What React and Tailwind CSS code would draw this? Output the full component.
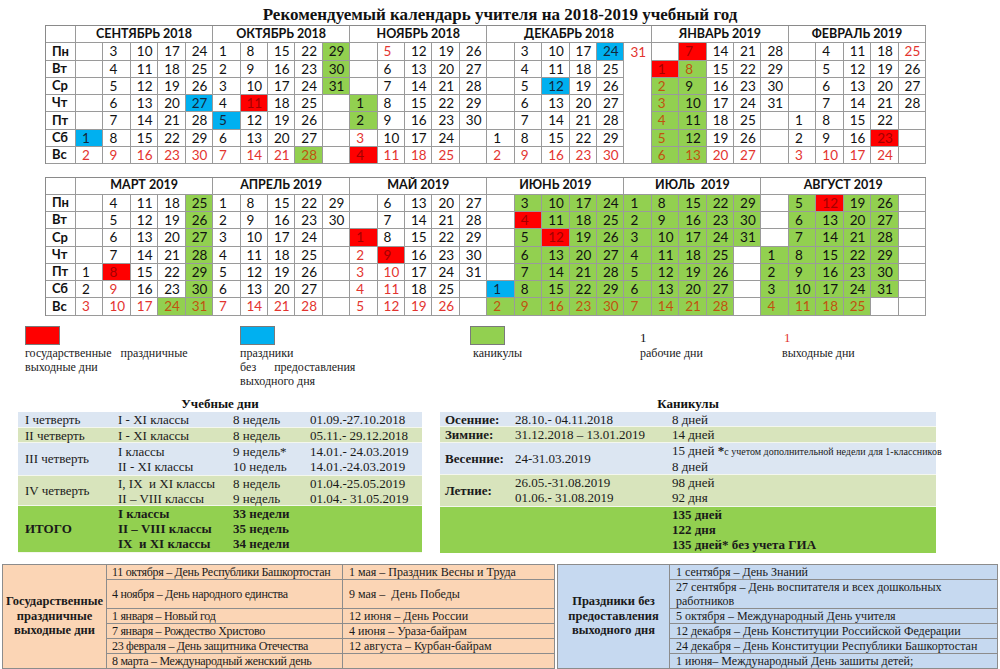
import React from 'react';

const SERIF = "font-['Liberation_Serif','Times_New_Roman',serif]";
const SANS = "font-['Lato','Open_Sans',sans-serif]";

const topMonths = [
  { name: 'СЕНТЯБРЬ 2018', cols: ['- - - - - 1B 2r', '3 4 5 6 7 8 9r', '10 11 12 13 14 15 16r', '17 18 19 20 21 22 23r', '24 25 26 27B 28 29 30r'] },
  { name: 'ОКТЯБРЬ 2018', cols: ['1 2 3 4 5B 6 7r', '8 9 10 11R 12 13 14r', '15 16 17 18 19 20 21r', '22 23 24 25 26 27 28G', '29g 30g 31g - - - -'] },
  { name: 'НОЯБРЬ 2018', cols: ['- - - 1g 2g 3r 4R', '5r 6 7 8 9 10 11r', '12 13 14 15 16 17 18r', '19 20 21 22 23 24 25r', '26 27 28 29 30 - -'] },
  { name: 'ДЕКАБРЬ 2018', open: 5, cols: ['- - - - - 1 2r', '3 4 5 6 7 8 9r', '10 11 12B 13 14 15 16r', '17 18 19 20 21 22 23r', '24B 25 26 27 28 29 30r', '31r - - - - - -'] },
  { name: 'ЯНВАРЬ 2019', cols: ['- 1R 2G 3G 4G 5G 6G', '7R 8G 9g 10g 11g 12g 13G', '14 15 16 17 18 19 20r', '21 22 23 24 25 26 27r', '28 29 30 31 - - -'] },
  { name: 'ФЕВРАЛЬ 2019', cols: ['- - - - 1 2 3r', '4 5 6 7 8 9 10r', '11 12 13 14 15 16 17r', '18 19 20 21 22 23R 24r', '25r 26 27 28 - - -'] },
];

const bottomMonths = [
  { name: 'МАРТ 2019', cols: ['- - - - 1 2 3r', '4 5 6 7 8R 9r 10r', '11 12 13 14 15 16 17r', '18 19 20 21 22 23 24G', '25g 26g 27g 28g 29g 30g 31G'] },
  { name: 'АПРЕЛЬ 2019', cols: ['1 2 3 4 5 6 7r', '8 9 10 11 12 13 14r', '15 16 17 18 19 20 21r', '22 23 24 25 26 27 28r', '29 30 - - - - -'] },
  { name: 'МАЙ 2019', cols: ['- - 1R 2r 3r 4r 5r', '6 7 8 9R 10r 11r 12r', '13 14 15 16 17 18 19r', '20 21 22 23 24 25 26r', '27 28 29 30 31 - -'] },
  { name: 'ИЮНЬ 2019', cols: ['- - - - - 1B 2G', '3g 4R 5g 6g 7g 8g 9G', '10g 11g 12R 13g 14g 15g 16G', '17g 18g 19g 20g 21g 22g 23G', '24g 25g 26g 27g 28g 29g 30G'] },
  { name: 'ИЮЛЬ  2019', cols: ['1g 2g 3g 4g 5g 6g 7G', '8g 9g 10g 11g 12g 13g 14G', '15g 16g 17g 18g 19g 20g 21G', '22g 23g 24g 25g 26g 27g 28G', '29g 30g 31g - - - -'] },
  { name: 'АВГУСТ 2019', cols: ['- - - 1g 2g 3g 4G', '5g 6g 7g 8g 9g 10g 11G', '12R 13g 14g 15g 16g 17g 18G', '19g 20g 21g 22g 23g 24g 25G', '26g 27g 28g 29g 30g 31g -', '- - - - - - -'] },
];

const DAYS = ['Пн', 'Вт', 'Ср', 'Чт', 'Пт', 'Сб', 'Вс'];

const TYPE = {
  '': 'text-[#111]',
  r: 'text-[#e3342f]',
  R: 'bg-[#ff0000] text-[#a30000]',
  B: 'bg-[#00b0f0] text-[#13263a]',
  g: 'bg-[#92d050] text-[#111]',
  G: 'bg-[#92d050] text-[#c0530f]',
};

function parse(tok) {
  if (tok === '-') return null;
  const m = tok.match(/^(\d+)([a-zA-Z]?)$/);
  return { d: m[1], t: m[2] || '' };
}

function Calendar({ months, className }) {
  const cells = [];
  cells.push(<div key="h0" className="h-[17.25px] border-r border-b border-[#9a9a9a]" />);
  months.forEach((m, mi) => {
    cells.push(
      <div
        key={'h' + mi + 1}
        className={
          (m.cols.length === 6 ? 'col-span-6' : 'col-span-5') +
          ' h-[17.25px] border-r border-b border-[#9a9a9a] flex items-center justify-center font-bold text-[12.5px] text-[#111] whitespace-pre'
        }
      >
        {m.name}
      </div>
    );
  });
  DAYS.forEach((day, r) => {
    cells.push(
      <div key={'l' + r} className="h-[17.25px] border-r border-b border-[#9a9a9a] flex items-center pl-[6px] font-bold text-[13px] text-[#111]">
        {day}
      </div>
    );
    months.forEach((m, mi) => {
      m.cols.forEach((col, ci) => {
        const c = parse(col.split(' ')[r]);
        const lastInMonth = ci === m.cols.length - 1;
        const openCol = m.open === ci && r < 6;
        const cls = [
          'h-[17.25px] flex items-center pl-[6px] text-[13.5px] border-[#9a9a9a]',
          lastInMonth || !openCol ? 'border-r' : '',
          openCol ? '' : 'border-b',
          c ? TYPE[c.t] : 'bg-white',
        ].join(' ');
        cells.push(
          <div key={`c${mi}-${ci}-${r}`} className={cls}>
            {c ? c.d : ''}
          </div>
        );
      });
    });
  });
  return (
    <div className={`ml-[45px] w-[881px] grid grid-cols-[30px_repeat(31,minmax(0,1fr))] border-l border-t border-[#8a8a8a] ${SANS} ${className || ''}`}>
      {cells}
    </div>
  );
}

function LegendItem({ w, box, num, lines, pl }) {
  return (
    <div className={`${w} ${pl || ''}`}>
      {box ? (
        <div className={`w-[35px] h-[19px] border border-[#7a7a7a] ${box}`} />
      ) : (
        <div className={`h-[19px] flex items-end text-[13px] leading-[15px] ${num}`}>1</div>
      )}
      <div className="mt-[1px]">
        {lines.map((l, i) => (
          <div key={i} className="whitespace-pre">{l}</div>
        ))}
      </div>
    </div>
  );
}

function Cell({ lines, bold, className }) {
  return (
    <div className={`flex flex-col justify-center ${bold ? 'font-bold' : ''} ${className || ''}`}>
      {lines.map((l, i) => (
        <div key={i} className="whitespace-pre">{l}</div>
      ))}
    </div>
  );
}

function StudyTable() {
  const rows = [
    { bg: 'bg-[#dce6f2]', h: 'h-[16px]', c: [['I четверть'], ['I - XI классы'], ['8 недель'], ['01.09.-27.10.2018']] },
    { bg: 'bg-[#d8e4bc]', h: 'h-[15px]', c: [['II четверть'], ['I - XI классы'], ['8 недель'], ['05.11.- 29.12.2018']] },
    { bg: 'bg-[#dce6f2]', h: 'h-[33px]', c: [['III четверть'], ['I классы', 'II - XI классы'], ['9 недель*', '10 недель'], ['14.01.- 24.03.2019', '14.01.-24.03.2019']] },
    { bg: 'bg-[#d8e4bc]', h: 'h-[30px]', c: [['IV четверть'], ['I, IX  и XI классы', 'II – VIII классы'], ['8 недель', '9 недель'], ['01.04.-25.05.2019', '01.04.- 31.05.2019']] },
    { bg: 'bg-[#92d050]', h: 'h-[47px]', bold: true, c: [['ИТОГО'], ['I классы', 'II – VIII классы', 'IX  и XI классы'], ['33 недели', '35 недель', '34 недели'], []] },
  ];
  return (
    <div className="ml-[18px] w-[404px]">
      <div className="text-center font-bold text-[13px] leading-[16px] h-[16px]">Учебные дни</div>
      <div className="text-[13px] leading-[15px] text-[#1a1a1a]">
        {rows.map((r, i) => (
          <div key={i} className={`grid grid-cols-[95px_115px_77px_117px] ${r.bg} ${r.h} border-b border-[#f4f7ee]`}>
            <Cell lines={r.c[0]} bold={r.bold} className="pl-[7px]" />
            <Cell lines={r.c[1]} bold={r.bold} className="pl-[5px]" />
            <Cell lines={r.c[2]} bold={r.bold} className="pl-[5px]" />
            <Cell lines={r.c[3]} bold={r.bold} className="pl-[5px]" />
          </div>
        ))}
      </div>
    </div>
  );
}

function HolidayTable() {
  return (
    <div className="ml-[18px] w-[496px]">
      <div className="text-center font-bold text-[13px] leading-[16px] h-[16px]">Каникулы</div>
      <div className="text-[13px] leading-[15px] text-[#1a1a1a]">
        <div className="grid grid-cols-[73px_157px_266px] bg-[#dce6f2] h-[15px] border-b border-[#f4f7ee]">
          <Cell lines={['Осенние:']} bold className="pl-[5px]" />
          <Cell lines={['28.10.- 04.11.2018']} className="pl-[2px]" />
          <Cell lines={['8 дней']} className="pl-[2px]" />
        </div>
        <div className="grid grid-cols-[73px_157px_266px] bg-[#d8e4bc] h-[16px] border-b border-[#f4f7ee]">
          <Cell lines={['Зимние:']} bold className="pl-[5px]" />
          <Cell lines={['31.12.2018 – 13.01.2019']} className="pl-[2px]" />
          <Cell lines={['14 дней']} className="pl-[2px]" />
        </div>
        <div className="grid grid-cols-[73px_157px_266px] bg-[#dce6f2] h-[32px] border-b border-[#f4f7ee]">
          <Cell lines={['Весенние:']} bold className="pl-[5px]" />
          <Cell lines={['24-31.03.2019']} className="pl-[2px]" />
          <div className="flex flex-col justify-center pl-[2px]">
            <div className="whitespace-nowrap">
              15 дней <span className="font-bold">*</span>
              <span className="text-[10px]">с учетом дополнительной недели для 1-классников</span>
            </div>
            <div>8 дней</div>
          </div>
        </div>
        <div className="grid grid-cols-[73px_157px_266px] bg-[#d8e4bc] h-[32px] border-b border-[#f4f7ee]">
          <Cell lines={['Летние:']} bold className="pl-[5px]" />
          <Cell lines={['26.05.-31.08.2019', '01.06.- 31.08.2019']} className="pl-[2px]" />
          <Cell lines={['98 дней', '92 дня']} className="pl-[2px]" />
        </div>
        <div className="grid grid-cols-[73px_157px_266px] bg-[#92d050] h-[46px]">
          <div />
          <div />
          <Cell lines={['135 дней', '122 дня', '135 дней* без учета ГИА']} bold className="pl-[2px]" />
        </div>
      </div>
    </div>
  );
}

function StateHolidays() {
  const mid = [
    '11 октября – День Республики Башкортостан',
    '4 ноября – День народного единства',
    '1 января – Новый год',
    '7 января – Рождество Христово',
    '23 февраля – День защитника Отечества',
    '8 марта – Международный женский день',
  ];
  const right = [
    '1 мая – Праздник Весны и Труда',
    '9 мая –  День Победы',
    '12 июня – День России',
    '4 июня – Ураза-байрам',
    '12 августа – Курбан-байрам',
    '',
  ];
  const cells = [];
  mid.forEach((m, i) => {
    const last = i === mid.length - 1;
    cells.push(
      <div key={'m' + i} className={`flex items-center pl-[5px] whitespace-pre tracking-[-0.3px] border-r border-[#8c8c8c] ${last ? '' : 'border-b'}`}>{m}</div>
    );
    cells.push(
      <div key={'r' + i} className={`flex items-center pl-[6px] whitespace-pre border-[#8c8c8c] ${last ? '' : 'border-b'}`}>{right[i]}</div>
    );
  });
  return (
    <div className="ml-[2px] w-[553px] bg-[#fbd5b5] border border-[#8c8c8c] grid grid-cols-[104px_236px_1fr] grid-rows-[15px_29px_15px_15px_15px_14px]">
      <div className="row-span-6 border-r border-[#8c8c8c] flex flex-col items-center justify-center font-bold text-[12.5px] leading-[14.5px]">
        <div>Государственные</div>
        <div>праздничные</div>
        <div>выходные дни</div>
      </div>
      {cells}
    </div>
  );
}

function OtherHolidays() {
  const items = [
    ['1 сентября – День Знаний'],
    ['27 сентября – День воспитателя и всех дошкольных', 'работников'],
    ['5 октября – Международный День учителя'],
    ['12 декабря – День Конституции Российской Федерации'],
    ['24 декабря – День Конституции Республики Башкортостан'],
    ['1 июня– Международный День зашиты детей;'],
  ];
  return (
    <div className="ml-[2px] w-[441px] bg-[#c6d9f0] border border-[#8c8c8c] grid grid-cols-[112px_1fr] grid-rows-[15px_29px_15px_15px_15px_14px]">
      <div className="row-span-6 border-r border-[#8c8c8c] flex flex-col items-center justify-center font-bold text-[12.5px] leading-[14.5px]">
        <div>Праздники без</div>
        <div>предоставления</div>
        <div>выходного дня</div>
      </div>
      {items.map((it, i) => (
        <div key={i} className={`flex flex-col justify-center pl-[6px] leading-[14px] whitespace-pre border-[#8c8c8c] ${i === items.length - 1 ? '' : 'border-b'}`}>
          {it.map((l, j) => (
            <div key={j}>{l}</div>
          ))}
        </div>
      ))}
    </div>
  );
}

export default function App() {
  return (
    <div className="w-[1000px] h-[669px] overflow-hidden bg-white text-[#111]">
      <div className={`h-[25px] pt-[5px] text-center font-bold text-[17px] leading-[20px] ${SERIF}`}>
        Рекомендуемый календарь учителя на 2018-2019 учебный год
      </div>
      <Calendar months={topMonths} />
      <Calendar months={bottomMonths} className="mt-[12.5px]" />

      <div className={`flex mt-[10px] h-[62px] text-[12px] leading-[14px] text-[#222] ${SERIF}`}>
        <LegendItem w="w-[240px]" pl="pl-[25px]" box="bg-[#ff0000]" lines={['государственные   праздничные', 'выходные дни']} />
        <LegendItem w="w-[230px]" box="bg-[#00b0f0]" lines={['праздники', 'без      предоставления', 'выходного дня']} />
        <LegendItem w="w-[170px]" box="bg-[#92d050]" lines={[' каникулы']} />
        <LegendItem w="w-[142px]" num="text-[#111]" lines={['рабочие дни']} />
        <LegendItem w="w-[150px]" num="text-[#e3342f] pl-[2px]" lines={['выходные дни']} />
      </div>

      <div className={`flex mt-[8px] ${SERIF}`}>
        <StudyTable />
        <HolidayTable />
      </div>

      <div className={`flex mt-[11px] text-[12px] leading-[14px] text-[#1a1a1a] ${SERIF}`}>
        <StateHolidays />
        <OtherHolidays />
      </div>
    </div>
  );
}
